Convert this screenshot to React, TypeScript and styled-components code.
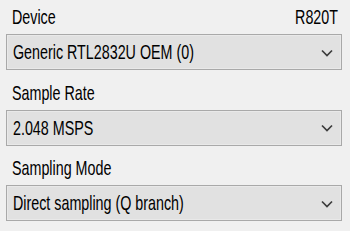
import React from 'react';
import styled, { createGlobalStyle } from 'styled-components';

const GlobalStyle = createGlobalStyle`
    html, body {
        margin: 0;
        padding: 0;
        background: #f0f0f0;
    }
`;

type Field = {
    label: string;
    value: string;
    extra?: string;
};

const fields: Field[] = [
    { label: 'Device', value: 'Generic RTL2832U OEM (0)', extra: 'R820T' },
    { label: 'Sample Rate', value: '2.048 MSPS' },
    { label: 'Sampling Mode', value: 'Direct sampling (Q branch)' },
];

const Chevron = () => (
    <svg width='12' height='8' viewBox='0 0 12 8'>
        <path d='M1 1.5 L6 6.5 L11 1.5' fill='none' stroke='#3c3c3c' strokeWidth='1.7' />
    </svg>
);

const App: React.FC = () => {
    return (
        <>
            <GlobalStyle />
            <Panel>
                {fields.map((field) => (
                    <Group key={field.label}>
                        <LabelRow>
                            <Text>{field.label}</Text>
                            {field.extra && <Text>{field.extra}</Text>}
                        </LabelRow>
                        <Select>
                            <Text>{field.value}</Text>
                            <Chevron />
                        </Select>
                    </Group>
                ))}
            </Panel>
        </>
    );
};

const Panel = styled.div`
    width: 350px;
    height: 231px;
    box-sizing: border-box;
    padding: 9px 8px 0 6px;
    display: flex;
    flex-direction: column;
    gap: 14.5px;
    font-family: 'Liberation Sans', Arial, sans-serif;
    color: #000;
`;

const Group = styled.div`
    display: flex;
    flex-direction: column;
    gap: 8px;
`;

const LabelRow = styled.div`
    height: 17px;
    display: flex;
    justify-content: space-between;
    padding: 0 4px 0 6px;
`;

const Text = styled.span`
    display: inline-block;
    font-size: 14.3px;
    line-height: 17px;
    white-space: nowrap;
    transform: scaleY(1.45);
`;

const Select = styled.div`
    height: 36px;
    box-sizing: border-box;
    display: flex;
    align-items: center;
    justify-content: space-between;
    padding: 1px 8px 0 6px;
    background: #e1e1e1;
    border: 1px solid #a9a9a9;
    box-shadow: inset 0 0 0 1px #e9e9e9;

    svg {
        flex-shrink: 0;
    }
`;

export default App;
